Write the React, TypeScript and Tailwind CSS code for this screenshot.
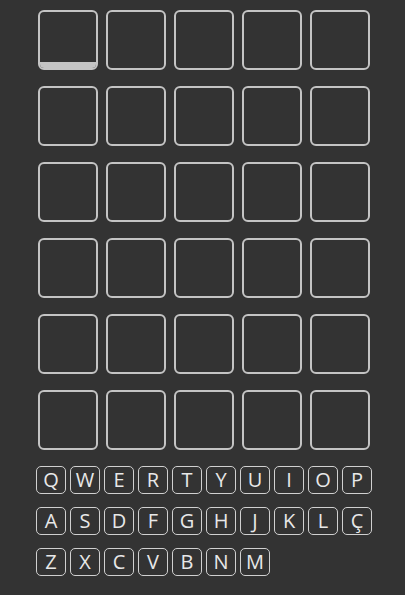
const ROWS = 6;
const COLS = 5;

const KEYS = [
  ["Q", "W", "E", "R", "T", "Y", "U", "I", "O", "P"],
  ["A", "S", "D", "F", "G", "H", "J", "K", "L", "Ç"],
  ["Z", "X", "C", "V", "B", "N", "M"],
];

function Tile({ active }: { active?: boolean }) {
  return (
    <div className="relative w-[60px] h-[60px] rounded-[6px] border-2 border-[#c4c4c4] overflow-hidden">
      {active && <div className="absolute left-0 right-0 bottom-0 h-[6px] bg-[#c4c4c4]" />}
    </div>
  );
}

function Key({ label }: { label: string }) {
  return (
    <button className="w-[30px] h-[28px] rounded-[5px] border border-[#d0d0d0] flex items-center justify-center text-[20px] leading-none text-[#e8e8e8] font-['Open_Sans',sans-serif]">
      {label}
    </button>
  );
}

export default function App() {
  return (
    <div className="w-[405px] h-[595px] bg-[#333333] pl-[38px] pt-[10px] font-['Open_Sans',sans-serif]">
      <div className="flex flex-col gap-[16px]">
        {Array.from({ length: ROWS }).map((_, r) => (
          <div key={r} className="flex gap-[8px]">
            {Array.from({ length: COLS }).map((_, c) => (
              <Tile key={c} active={r === 0 && c === 0} />
            ))}
          </div>
        ))}
      </div>
      <div className="flex flex-col gap-[13px] mt-[16px] -ml-[2px]">
        {KEYS.map((row, i) => (
          <div key={i} className="flex gap-[4px]">
            {row.map((k) => (
              <Key key={k} label={k} />
            ))}
          </div>
        ))}
      </div>
    </div>
  );
}
